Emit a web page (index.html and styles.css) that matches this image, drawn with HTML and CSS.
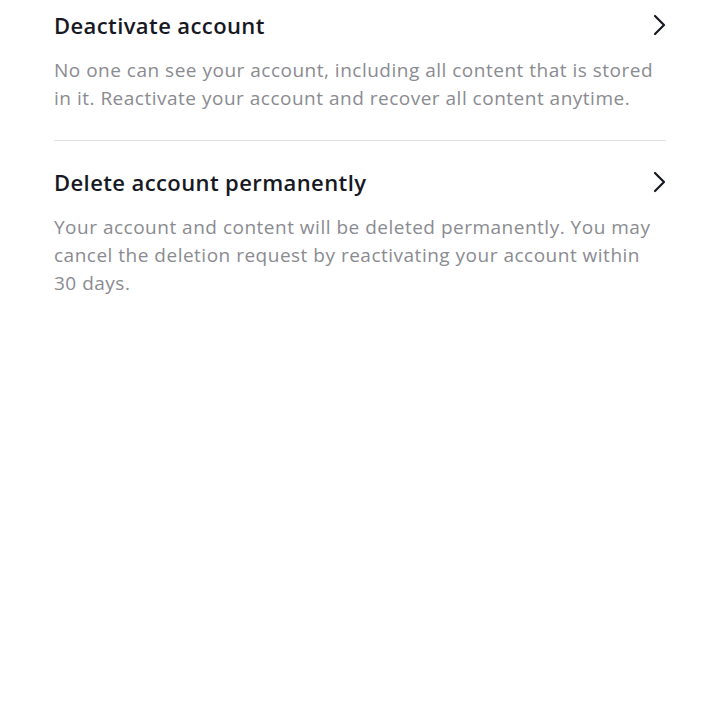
FILE: index.html
```html
<!DOCTYPE html>
<html lang="en">
<head>
    <meta charset="UTF-8">
    <meta name="viewport" content="width=device-width, initial-scale=1.0">
    <title>Deactivate or delete account</title>
    <link rel="stylesheet" href="styles.css">
</head>
<body>

<div class="options">
    <div class="option first">
        <div class="option-head">
            <span class="option-title">Deactivate account</span>
            <svg class="chevron" width="16" height="22" viewBox="0 0 16 22">
                <path d="M4 2 L13 11 L4 20" fill="none" stroke="#161823" stroke-width="2.2" stroke-linecap="round" stroke-linejoin="round"/>
            </svg>
        </div>
        <p class="option-text">No one can see your account, including all content that is stored in it. Reactivate your account and recover all content anytime.</p>
    </div>

    <div class="option">
        <div class="option-head">
            <span class="option-title">Delete account permanently</span>
            <svg class="chevron" width="16" height="22" viewBox="0 0 16 22">
                <path d="M4 2 L13 11 L4 20" fill="none" stroke="#161823" stroke-width="2.2" stroke-linecap="round" stroke-linejoin="round"/>
            </svg>
        </div>
        <p class="option-text">Your account and content will be deleted permanently. You may cancel the deletion request by reactivating your account within 30 days.</p>
    </div>
</div>

</body>
</html>
```

FILE: styles.css
```css
body {
    margin: 0;
    font-family: "Open Sans", "Noto Sans", sans-serif;
    background-color: #fff;
}

.options {
    padding: 0 54px;
}

.option {
    padding: 28px 0;
    border-bottom: 1px solid #e3e3e4;
}

.option:last-child {
    border-bottom: none;
}

.option.first {
    padding-top: 12px;
}

.option-head {
    display: flex;
    align-items: center;
    justify-content: space-between;
    height: 30px;
    margin-top: -2px;
}

.option-title {
    font-size: 22px;
    font-weight: 600;
    letter-spacing: 0.4px;
    color: #161823;
}

.chevron {
    display: block;
    margin-right: -1px;
}

.option-text {
    margin: 16px 0 0;
    font-size: 19px;
    line-height: 28px;
    letter-spacing: 0.5px;
    color: #8a8b91;
}
```
